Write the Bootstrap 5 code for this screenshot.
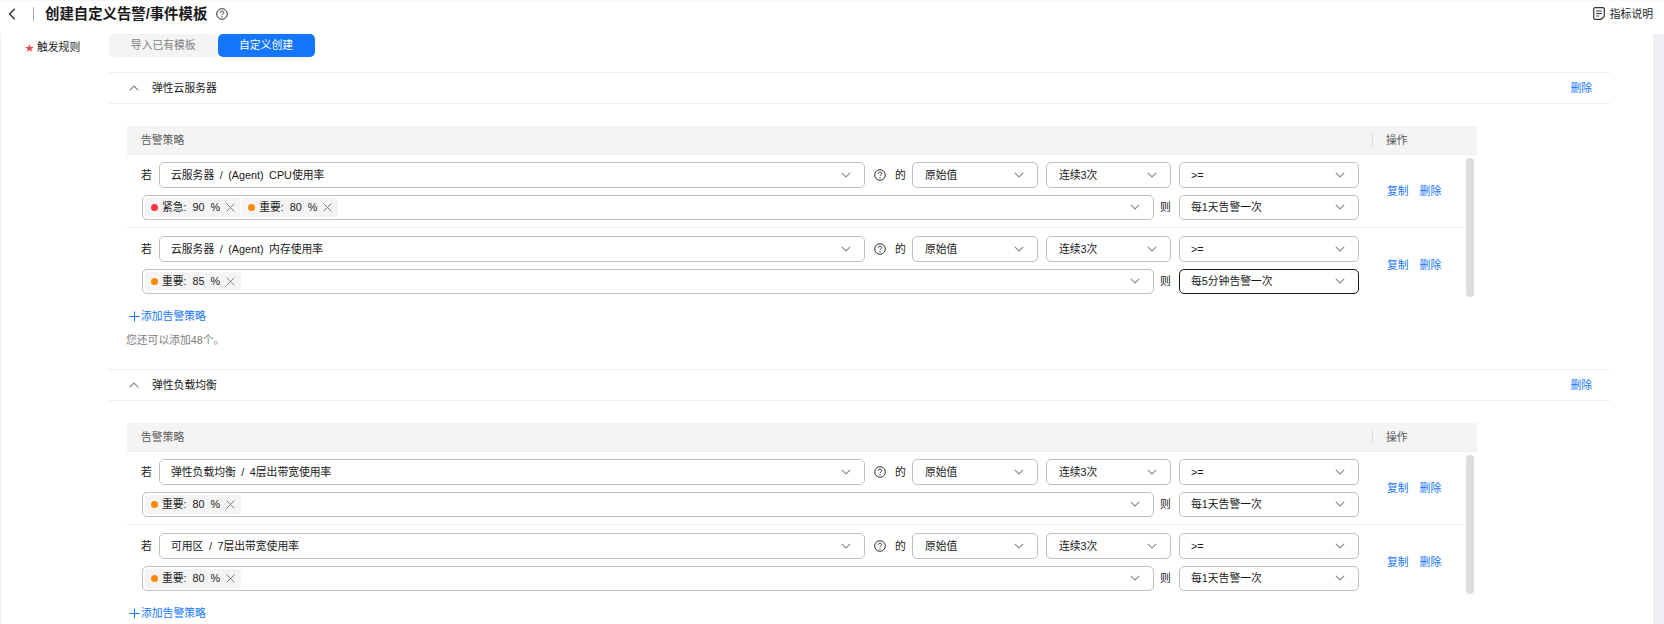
<!DOCTYPE html>
<html lang="zh-CN">
<head>
<meta charset="utf-8">
<title>创建自定义告警/事件模板</title>
<link href="https://cdn.jsdelivr.net/npm/bootstrap@5.3.0/dist/css/bootstrap.min.css" rel="stylesheet">
<style>
html,body{height:624px;overflow:hidden;background:#fff}
body{font-family:"Liberation Sans","Noto Sans CJK SC",sans-serif;font-size:10.8px;line-height:14px;color:#191919}
a{color:#1476ff}
.top-strip{height:34px;padding:0 11px 8px 8px;border-top:1px solid #f8f8f8}
.back-ico{width:8px;height:12px}
.top-sep{width:1px;height:14px;background:#aaa;margin:0 11px 0 17px}
.page-title{font-size:14.4px;line-height:20px;font-weight:700;margin:0 9px 0 0;color:#191919}
.help-ico{width:12px;height:12px;flex:none}
.doc-ico{width:12px;height:13px;margin-right:5px}
.work-area{height:590px;border-left:1px solid #f0f1f5;border-right:11px solid #eef0f5}
.rule-label{width:108px;padding:6px 0 0 24px;flex:none}
.req-star{color:#f0453f;display:inline-block;width:12px;font-size:9px;vertical-align:0}
.rule-col{width:1501px;flex:none}
.tab-btn{width:108.5px;height:23px;padding:0;font-size:10.8px;line-height:23px;border:0;border-radius:5px;background:#f4f4f4;color:#808080}
.tab-btn.tab-on{width:97px;background:#1476ff;color:#fff}
.rule-sec{height:297px}
.tabs-wrap{height:38px}
.sec-head{height:32px;border-top:1px solid #eee;border-bottom:1px solid #eee;padding:0 18px 0 20px;margin-bottom:22px}
.sec-chev{width:10px;height:6px;margin-right:13px}
.policy-tbl{margin-left:18px;width:1350px}
.policy-head{height:29px;background:#f4f4f4;border-bottom:1px solid #eee;color:#595959;padding-left:14px}
.head-ops{width:105px;border-left:1px solid #ddd;height:14px;padding-left:13px;line-height:14px}
.policy-body{height:142px}
.policy-rows{width:1336px;flex:none}
.policy-row{height:72px;padding:7px 0 0 15px}
.policy-row+.policy-row{border-top:1px solid #eee;padding-top:8px}
.row-fields{width:1217px;flex:none}
.field-line{height:25.5px}
.field-line+.field-line{margin-top:7px}
.fake-select{height:100%;border:1px solid #c0c0c0;border-radius:5px;padding:0 13px 0 12px;background:#fff;white-space:nowrap;word-spacing:2.500px}
.fake-select.is-active{border-color:#191919}
.sel-metric{margin-left:6px;min-width:0;padding-left:11px}
.sel-mid{width:126px;margin-left:6px}
.sel-mid+.sel-mid{width:125px;margin-left:8px}
.sel-op{width:180px;margin-left:8px;padding-left:11px}
.sel-multi{padding-left:2px;min-width:0}
.chev-ico{width:10px;height:6px;flex:none}
.word{width:11px;flex:none}
.word-if{width:12px;margin-left:-1px}
.m-help{margin-left:9px}
.m-of{margin-left:9px}
.m-then{margin-left:6px}
.threshold{height:19px;padding:0 6px;background:#f4f4f4;border-radius:3px;margin-right:1px;word-spacing:3px}
.lvl-dot{width:7px;height:7px;border-radius:50%;margin-right:4px}
.dot-red{background:#f4333c}
.dot-org{background:#ff8a00}
.x-ico{width:9px;height:9px;margin-left:6px}
.row-acts{margin-left:28px;height:58px;gap:11px}
.fake-scroll{width:8px;height:139px;margin:3px 0 0 3px;background:#dcdcdc;border-radius:4px}
.add-link{margin:12px 0 0 20px;display:inline-flex}
.plus-ico{width:11px;height:11px;margin-right:1px}
.tip-line{margin-top:8px;color:#808080;margin-left:17px}
</style>
</head>
<body>
<svg width="0" height="0" class="position-absolute">
<symbol id="i-chev" viewBox="0 0 10 6"><path d="M.8.8 5 5 9.2.8" fill="none" stroke="#8a8a8a" stroke-width="1.1"/></symbol>
<symbol id="i-up" viewBox="0 0 10 6"><path d="M.6 5.4 5 1l4.400 4.400" fill="none" stroke="#808080" stroke-width="1.1"/></symbol>
<symbol id="i-help" viewBox="0 0 12 12"><circle cx="6" cy="6" r="5.300" fill="none" stroke="#333" stroke-width="1"/><path d="M4.300 4.700C4.300 3.700 5 3.100 6 3.100s1.700.6 1.700 1.500c0 1.300-1.700 1.300-1.700 2.600" fill="none" stroke="#333" stroke-width="1"/><circle cx="6" cy="8.900" r=".65" fill="#333"/></symbol>
<symbol id="i-x" viewBox="0 0 9 9"><path d="M.6.6l7.800 7.800M8.400.6.600 8.400" fill="none" stroke="#808080" stroke-width="1"/></symbol>
</svg>

<header class="top-strip d-flex align-items-center">
  <svg class="back-ico" viewBox="0 0 8 12"><path d="M6.800.8 1.500 6l5.300 5.200" fill="none" stroke="#333" stroke-width="1.400"/></svg>
  <span class="top-sep"></span>
  <h1 class="page-title">创建自定义告警/事件模板</h1>
  <svg class="help-ico"><use href="#i-help"/></svg>
  <a href="#" class="ms-auto d-flex align-items-center text-decoration-none text-body">
    <svg class="doc-ico" viewBox="0 0 12 13"><path d="M2 .7h8A1.300 1.300 0 0 1 11.300 2v7.500L8 12.300H2A1.300 1.300 0 0 1 .7 11V2A1.300 1.300 0 0 1 2 .7Z" fill="none" stroke="#333" stroke-width="1.200"/><path d="M3.200 4h5.600M3.200 6.500h5.600M3.200 9h3" stroke="#333" stroke-width="1.100"/></svg>
    <span>指标说明</span>
  </a>
</header>

<main class="work-area d-flex overflow-hidden">
  <div class="rule-label"><span class="req-star">★</span>触发规则</div>
  <div class="rule-col">
    <div class="tabs-wrap d-flex align-items-start">
      <button type="button" class="btn tab-btn">导入已有模板</button>
      <button type="button" class="btn tab-btn tab-on">自定义创建</button>
    </div>

    <section class="rule-sec">
      <div class="sec-head d-flex align-items-center">
        <svg class="sec-chev"><use href="#i-up"/></svg>
        <span>弹性云服务器</span>
        <a href="#" class="ms-auto text-decoration-none">删除</a>
      </div>
      <div class="policy-tbl">
        <div class="policy-head d-flex align-items-center justify-content-between">
          <span>告警策略</span><span class="head-ops">操作</span>
        </div>
        <div class="policy-body d-flex">
          <div class="policy-rows">
            <div class="policy-row d-flex">
              <div class="row-fields">
                <div class="field-line d-flex align-items-center">
                  <span class="word word-if">若</span>
                  <div class="fake-select sel-metric flex-fill d-flex align-items-center justify-content-between"><span>云服务器 / (Agent) CPU使用率</span><svg class="chev-ico"><use href="#i-chev"/></svg></div>
                  <svg class="help-ico m-help"><use href="#i-help"/></svg>
                  <span class="word m-of">的</span>
                  <div class="fake-select sel-mid d-flex align-items-center justify-content-between"><span>原始值</span><svg class="chev-ico"><use href="#i-chev"/></svg></div>
                  <div class="fake-select sel-mid d-flex align-items-center justify-content-between"><span>连续3次</span><svg class="chev-ico"><use href="#i-chev"/></svg></div>
                  <div class="fake-select sel-op d-flex align-items-center justify-content-between"><span>&gt;=</span><svg class="chev-ico"><use href="#i-chev"/></svg></div>
                </div>
                <div class="field-line d-flex align-items-center">
                  <div class="fake-select sel-multi flex-fill d-flex align-items-center">
                    <span class="threshold d-flex align-items-center"><i class="lvl-dot dot-red"></i>紧急: 90 %<svg class="x-ico"><use href="#i-x"/></svg></span>
                    <span class="threshold d-flex align-items-center"><i class="lvl-dot dot-org"></i>重要: 80 %<svg class="x-ico"><use href="#i-x"/></svg></span>
                    <svg class="chev-ico ms-auto"><use href="#i-chev"/></svg>
                  </div>
                  <span class="word m-then">则</span>
                  <div class="fake-select sel-op d-flex align-items-center justify-content-between"><span>每1天告警一次</span><svg class="chev-ico"><use href="#i-chev"/></svg></div>
                </div>
              </div>
              <div class="row-acts d-flex align-items-center"><a href="#" class="text-decoration-none">复制</a><a href="#" class="text-decoration-none">删除</a></div>
            </div>
            <div class="policy-row d-flex">
              <div class="row-fields">
                <div class="field-line d-flex align-items-center">
                  <span class="word word-if">若</span>
                  <div class="fake-select sel-metric flex-fill d-flex align-items-center justify-content-between"><span>云服务器 / (Agent) 内存使用率</span><svg class="chev-ico"><use href="#i-chev"/></svg></div>
                  <svg class="help-ico m-help"><use href="#i-help"/></svg>
                  <span class="word m-of">的</span>
                  <div class="fake-select sel-mid d-flex align-items-center justify-content-between"><span>原始值</span><svg class="chev-ico"><use href="#i-chev"/></svg></div>
                  <div class="fake-select sel-mid d-flex align-items-center justify-content-between"><span>连续3次</span><svg class="chev-ico"><use href="#i-chev"/></svg></div>
                  <div class="fake-select sel-op d-flex align-items-center justify-content-between"><span>&gt;=</span><svg class="chev-ico"><use href="#i-chev"/></svg></div>
                </div>
                <div class="field-line d-flex align-items-center">
                  <div class="fake-select sel-multi flex-fill d-flex align-items-center">
                    <span class="threshold d-flex align-items-center"><i class="lvl-dot dot-org"></i>重要: 85 %<svg class="x-ico"><use href="#i-x"/></svg></span>
                    <svg class="chev-ico ms-auto"><use href="#i-chev"/></svg>
                  </div>
                  <span class="word m-then">则</span>
                  <div class="fake-select sel-op is-active d-flex align-items-center justify-content-between"><span>每5分钟告警一次</span><svg class="chev-ico"><use href="#i-chev"/></svg></div>
                </div>
              </div>
              <div class="row-acts d-flex align-items-center"><a href="#" class="text-decoration-none">复制</a><a href="#" class="text-decoration-none">删除</a></div>
            </div>
          </div>
          <div class="fake-scroll"></div>
        </div>
      </div>
      <a href="#" class="add-link align-items-center text-decoration-none"><svg class="plus-ico" viewBox="0 0 11 11"><path d="M5.500.5v10M.5 5.500h10" stroke="#1476ff" stroke-width="1"/></svg>添加告警策略</a>
      <div class="tip-line">您还可以添加48个。</div>
    </section>

    <section class="rule-sec">
      <div class="sec-head d-flex align-items-center">
        <svg class="sec-chev"><use href="#i-up"/></svg>
        <span>弹性负载均衡</span>
        <a href="#" class="ms-auto text-decoration-none">删除</a>
      </div>
      <div class="policy-tbl">
        <div class="policy-head d-flex align-items-center justify-content-between">
          <span>告警策略</span><span class="head-ops">操作</span>
        </div>
        <div class="policy-body d-flex">
          <div class="policy-rows">
            <div class="policy-row d-flex">
              <div class="row-fields">
                <div class="field-line d-flex align-items-center">
                  <span class="word word-if">若</span>
                  <div class="fake-select sel-metric flex-fill d-flex align-items-center justify-content-between"><span>弹性负载均衡 / 4层出带宽使用率</span><svg class="chev-ico"><use href="#i-chev"/></svg></div>
                  <svg class="help-ico m-help"><use href="#i-help"/></svg>
                  <span class="word m-of">的</span>
                  <div class="fake-select sel-mid d-flex align-items-center justify-content-between"><span>原始值</span><svg class="chev-ico"><use href="#i-chev"/></svg></div>
                  <div class="fake-select sel-mid d-flex align-items-center justify-content-between"><span>连续3次</span><svg class="chev-ico"><use href="#i-chev"/></svg></div>
                  <div class="fake-select sel-op d-flex align-items-center justify-content-between"><span>&gt;=</span><svg class="chev-ico"><use href="#i-chev"/></svg></div>
                </div>
                <div class="field-line d-flex align-items-center">
                  <div class="fake-select sel-multi flex-fill d-flex align-items-center">
                    <span class="threshold d-flex align-items-center"><i class="lvl-dot dot-org"></i>重要: 80 %<svg class="x-ico"><use href="#i-x"/></svg></span>
                    <svg class="chev-ico ms-auto"><use href="#i-chev"/></svg>
                  </div>
                  <span class="word m-then">则</span>
                  <div class="fake-select sel-op d-flex align-items-center justify-content-between"><span>每1天告警一次</span><svg class="chev-ico"><use href="#i-chev"/></svg></div>
                </div>
              </div>
              <div class="row-acts d-flex align-items-center"><a href="#" class="text-decoration-none">复制</a><a href="#" class="text-decoration-none">删除</a></div>
            </div>
            <div class="policy-row d-flex">
              <div class="row-fields">
                <div class="field-line d-flex align-items-center">
                  <span class="word word-if">若</span>
                  <div class="fake-select sel-metric flex-fill d-flex align-items-center justify-content-between"><span>可用区 / 7层出带宽使用率</span><svg class="chev-ico"><use href="#i-chev"/></svg></div>
                  <svg class="help-ico m-help"><use href="#i-help"/></svg>
                  <span class="word m-of">的</span>
                  <div class="fake-select sel-mid d-flex align-items-center justify-content-between"><span>原始值</span><svg class="chev-ico"><use href="#i-chev"/></svg></div>
                  <div class="fake-select sel-mid d-flex align-items-center justify-content-between"><span>连续3次</span><svg class="chev-ico"><use href="#i-chev"/></svg></div>
                  <div class="fake-select sel-op d-flex align-items-center justify-content-between"><span>&gt;=</span><svg class="chev-ico"><use href="#i-chev"/></svg></div>
                </div>
                <div class="field-line d-flex align-items-center">
                  <div class="fake-select sel-multi flex-fill d-flex align-items-center">
                    <span class="threshold d-flex align-items-center"><i class="lvl-dot dot-org"></i>重要: 80 %<svg class="x-ico"><use href="#i-x"/></svg></span>
                    <svg class="chev-ico ms-auto"><use href="#i-chev"/></svg>
                  </div>
                  <span class="word m-then">则</span>
                  <div class="fake-select sel-op d-flex align-items-center justify-content-between"><span>每1天告警一次</span><svg class="chev-ico"><use href="#i-chev"/></svg></div>
                </div>
              </div>
              <div class="row-acts d-flex align-items-center"><a href="#" class="text-decoration-none">复制</a><a href="#" class="text-decoration-none">删除</a></div>
            </div>
          </div>
          <div class="fake-scroll"></div>
        </div>
      </div>
      <a href="#" class="add-link align-items-center text-decoration-none"><svg class="plus-ico" viewBox="0 0 11 11"><path d="M5.500.5v10M.5 5.500h10" stroke="#1476ff" stroke-width="1"/></svg>添加告警策略</a>
    </section>
  </div>
</main>
<script src="https://cdn.jsdelivr.net/npm/bootstrap@5.3.0/dist/js/bootstrap.bundle.min.js"></script>
</body>
</html>
